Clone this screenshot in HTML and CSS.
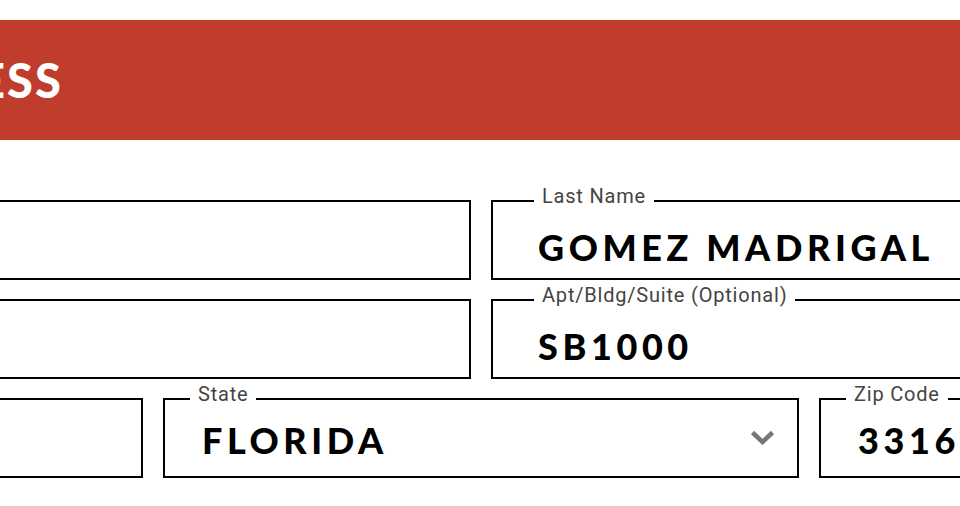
FILE: index.html
```html
<!DOCTYPE html>
<html lang="en">
<head>
    <meta charset="UTF-8">
    <meta name="viewport" content="width=device-width, initial-scale=1.0">
    <title>Shipping Address</title>
    <link rel="stylesheet" href="styles.css">
</head>
<body>

    <div class="page">
        <!-- Cabecalho -->
        <div class="banner">
            <h1>ADDRESS</h1>
        </div>

        <!-- Formulario -->
        <form class="form">
            <div class="field half">
                <label>First Name</label>
                <span class="value"></span>
            </div>
            <div class="field half">
                <label>Last Name</label>
                <span class="value">GOMEZ MADRIGAL</span>
            </div>

            <div class="field half">
                <label>Address</label>
                <span class="value"></span>
            </div>
            <div class="field half">
                <label>Apt/Bldg/Suite (Optional)</label>
                <span class="value">SB1000</span>
            </div>

            <div class="field small">
                <label>City</label>
                <span class="value"></span>
            </div>
            <div class="field small half">
                <label>State</label>
                <span class="value">FLORIDA</span>
                <svg class="chevron" width="25" height="15" viewBox="0 0 25 15">
                    <polyline points="2.5,2.5 12.5,12 22.5,2.5" fill="none" stroke="#777" stroke-width="4.5"/>
                </svg>
            </div>
            <div class="field small">
                <label>Zip Code</label>
                <span class="value">33166</span>
            </div>
        </form>
    </div>

</body>
</html>
```

FILE: styles.css
```css
body {
    margin: 0;
    font-family: 'Roboto', sans-serif;
    background: #fff;
    overflow: hidden;
}

.page {
    width: 1292px;
    margin-left: -165px;
    padding-top: 20px;
}

.banner {
    background: #c03c2c;
    height: 120px;
    display: flex;
    align-items: center;
}

.banner h1 {
    margin: 0;
    color: #fff;
    font-family: 'Lato', sans-serif;
    font-weight: 900;
    font-size: 47px;
    letter-spacing: 2px;
}

.form {
    display: grid;
    grid-template-columns: repeat(4, 308px);
    column-gap: 20px;
    row-gap: 19px;
    margin-top: 60px;
}

.field {
    position: relative;
    display: flex;
    align-items: flex-start;
    height: 80px;
    box-sizing: border-box;
    border: 2px solid #000;
    padding: 25px 0 0 45px;
}

.field.half {
    grid-column: span 2;
}

.field label {
    position: absolute;
    top: -18px;
    left: 41px;
    padding: 0 8px;
    background: #fff;
    color: #444;
    font-size: 20px;
    line-height: 24px;
    letter-spacing: 0.8px;
}

.value {
    font-family: 'Lato', sans-serif;
    font-weight: 900;
    font-size: 36px;
    line-height: 40px;
    letter-spacing: 4.6px;
    color: #000;
}

.field.small {
    padding: 20px 0 0 37px;
}

.field.small label {
    left: 25px;
}

.chevron {
    margin-top: 10px;
    margin-left: auto;
    margin-right: 22px;
}
```
